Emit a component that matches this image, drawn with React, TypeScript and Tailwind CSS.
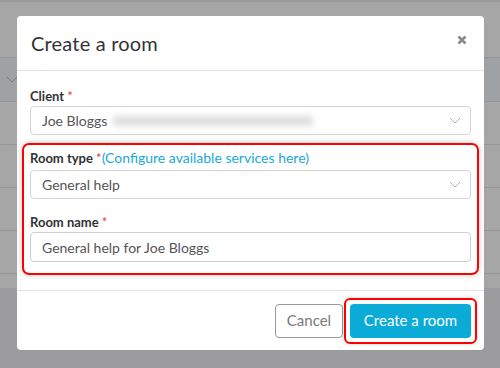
import React from "react";

const Chevron = ({ className = "" }: { className?: string }) => (
  <svg width="12" height="7" viewBox="0 0 12 7" className={className}>
    <polyline points="1,1 6,6 11,1" fill="none" stroke="currentColor" strokeWidth="1" />
  </svg>
);

const Field = ({
  label,
  extra,
  gap = "mb-[1px]",
  children,
}: {
  label: string;
  extra?: React.ReactNode;
  gap?: string;
  children: React.ReactNode;
}) => (
  <div className="flex flex-col">
    <div className={`h-[18px] leading-[18px] text-[13px] font-bold text-[#333] whitespace-nowrap ${gap}`}>
      {label} <span className="text-[#e0403f] font-normal">*</span>
      {extra}
    </div>
    {children}
  </div>
);

const Select = ({ children }: { children: React.ReactNode }) => (
  <div className="h-[29px] rounded-[4px] border border-[#d4d4d4] flex items-center pl-[11px] pr-[9px] text-[14px] text-[#555]">
    <div className="flex-1 flex items-center">{children}</div>
    <Chevron className="text-[#b5b5b5]" />
  </div>
);

const BgRow = () => <div className="h-[43px] border-b border-[#969696]" />;

export default function App() {
  return (
    <div
      className="relative w-[500px] h-[368px] overflow-hidden bg-[#a6a6a6]"
      style={{ fontFamily: "Lato, 'Noto Sans', sans-serif" }}
    >
      {/* page behind the backdrop */}
      <div className="flex flex-col">
        <div className="h-[2px] bg-[#9a9a9a]" />
        <div className="h-[56px] border-b border-[#969696]" />
        <div className="h-[44px] bg-[#9fa2a4] border-b border-[#969696] flex items-center pl-[6px]">
          <Chevron className="text-[#6f7d8a]" />
        </div>
        <BgRow />
        <BgRow />
        <BgRow />
        <BgRow />
        <div className="h-[14px]" />
        <div className="h-[80px] bg-[#9c9c9e]" />
      </div>

      {/* dialog */}
      <div className="absolute left-[17px] top-[16px] w-[467px] h-[334px] bg-white rounded-[4px] flex flex-col">
        <div className="h-[55px] border-b border-[#e3e3e3] flex items-center justify-between pl-[14px] pr-[17px]">
          <span className="text-[20px] text-[#333] tracking-[0.2px]">Create a room</span>
          <svg width="10" height="10" viewBox="0 0 10 10" className="-mt-[6px]">
            <path d="M1.5 1.5 L8.5 8.5 M8.5 1.5 L1.5 8.5" stroke="#8a8a8a" strokeWidth="2.6" />
          </svg>
        </div>

        <div className="px-[13px] pt-[16px] pb-[15px] flex flex-col border-b border-[#e3e3e3]">
          <Field label="Client">
            <Select>
              <span>Joe Bloggs</span>
              <span className="ml-[6px] h-[10px] w-[200px] rounded bg-[#dddddd] blur-[3px]" />
            </Select>
          </Field>

          <div className="-mx-[8px] mt-[8px] border-2 border-[#ff0000] rounded-[7px] px-[6px] pt-[4px] pb-[11px] shadow-[0_0_6px_rgba(0,0,0,0.22)] flex flex-col">
            <Field
              label="Room type"
              gap="mb-[3px]"
              extra={
                <span className="text-[14px] font-normal text-[#1aa9d6]">
                  (Configure available services here)
                </span>
              }
            >
              <Select>
                <span>General help</span>
              </Select>
            </Field>
            <div className="mt-[14px]">
              <Field label="Room name">
                <div className="h-[30px] rounded-[4px] border border-[#cfcfcf] flex items-center pl-[11px] text-[14px] text-[#555]">
                  General help for Joe Bloggs
                </div>
              </Field>
            </div>
          </div>
        </div>

        <div className="flex-1 flex items-center justify-end pr-[7px] gap-[1px]">
          <button className="h-[34px] w-[68px] rounded-[4px] border border-[#9a9a9a] text-[15px] text-[#7a7a7a] bg-white">
            Cancel
          </button>
          <div className="border-2 border-[#ff0000] rounded-[6px] p-[4px] shadow-[0_0_4px_rgba(0,0,0,0.18)]">
            <button className="h-[34px] w-[121px] rounded-[4px] bg-[#0aabd6] text-[15px] text-white">
              Create a room
            </button>
          </div>
        </div>
      </div>
    </div>
  );
}
